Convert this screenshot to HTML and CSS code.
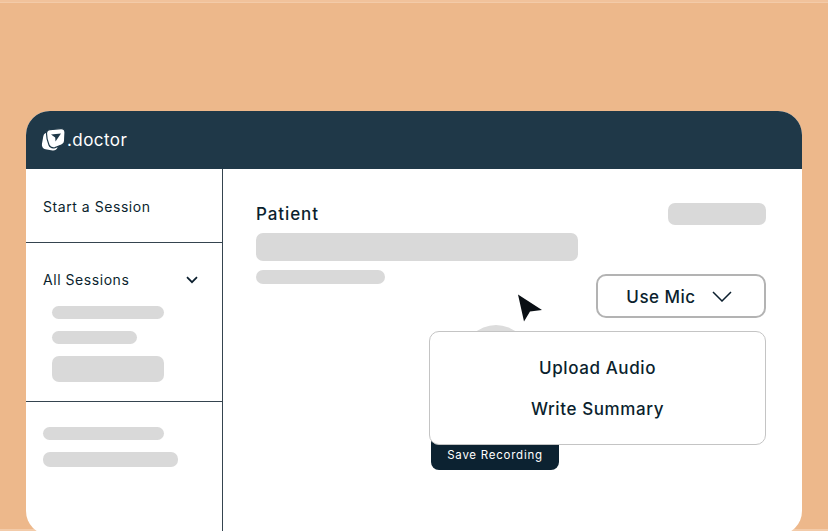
FILE: index.html

```html
<!DOCTYPE html>
<html>
<head>
  <meta charset="UTF-8">
  <title>.doctor</title>
  <link rel="stylesheet" href="styles.css">
</head>
<body>
  <div class="frame">
    <div class="card">
      <header class="topbar">
        <svg class="logo" width="26" height="26" viewBox="0 0 26 26">
          <rect x="1.5" y="6" width="16" height="17" rx="4.5" transform="rotate(10 9.5 14.5)" fill="#fff"/>
          <path d="M5.5 6.5 Q5.5 3 9 2.6 L20 1.6 Q24 1.5 24 5.5 L23.6 14 Q23.4 17 20.5 18 L14 20.6 Q9.5 21.5 8 18 Q5.5 12 5.5 6.5 Z" fill="#fff" stroke="#1f3848" stroke-width="1.2"/>
          <path d="M10 7.5 L20 6.6 L14.5 14.5 L14.2 10.6 Z" fill="#1f3848"/>
        </svg>
        <span class="brand">.doctor</span>
      </header>
      <div class="body">
        <aside class="sidebar">
          <section class="side-start">Start a Session</section>
          <section class="side-sessions">
            <div class="sessions-head">
              <span>All Sessions</span>
              <svg width="12" height="8" viewBox="0 0 12 8"><path d="M1 1.2 L6 6.2 L11 1.2" fill="none" stroke="#0b1f2e" stroke-width="1.7"/></svg>
            </div>
            <div class="ph ph-a"></div>
            <div class="ph ph-b"></div>
            <div class="ph ph-c"></div>
          </section>
          <section class="side-extra">
            <div class="ph ph-d"></div>
            <div class="ph ph-e"></div>
          </section>
        </aside>
        <main class="content">
          <div class="patient-row">
            <div class="patient-label">Patient</div>
            <div class="ph ph-tag"></div>
          </div>
          <div class="ph ph-name"></div>
          <div class="ph ph-sub"></div>
          <div class="mic-row">
            <button class="mic-btn">
              <span>Use Mic</span>
              <svg width="20" height="11" viewBox="0 0 20 11"><path d="M1 1 L10 10 L19 1" fill="none" stroke="#0b1f2e" stroke-width="1.5"/></svg>
            </button>
          </div>
          <svg class="cursor" width="26" height="28" viewBox="0 0 26 28"><path d="M1 0.5 L25 16 L13 17.5 L7 27.5 Z" fill="#0a0f14"/></svg>
          <div class="circle"></div>
          <button class="save-btn">Save Recording</button>
          <div class="popup">
            <div>Upload Audio</div>
            <div>Write Summary</div>
          </div>
        </main>
      </div>
    </div>
  </div>
</body>
</html>
```

FILE: styles.css

```css
html, body { margin: 0; padding: 0; }
body { width: 828px; height: 531px; overflow: hidden; background: #f1c29b; font-family: Inter, "Liberation Sans", sans-serif; color: #0b1f2e; }
.frame { height: 529px; margin-top: 2px; padding: 108px 26px 0; box-sizing: border-box; background: #edb88b; border-top: 1px solid #f3cba9; border-bottom: 2px solid #f3cba9; }
.card { height: 424px; background: #fff; border-radius: 24px; overflow: hidden; display: flex; flex-direction: column; }
.topbar { height: 58px; flex: none; background: #1f3848; display: flex; align-items: center; gap: 0; padding-left: 15px; box-sizing: border-box; }
.logo { margin-top: -1px; }
.brand { color: #fff; font-size: 17px; letter-spacing: 0.45px; }
.body { flex: 1; display: flex; }
.sidebar { width: 197px; flex: none; box-sizing: border-box; border-right: 1px solid #35444f; font-size: 14px; letter-spacing: 0.55px; display: flex; flex-direction: column; }
.side-start { height: 74px; box-sizing: border-box; padding: 29px 0 0 17px; border-bottom: 1px solid #35444f; }
.side-sessions { height: 159px; box-sizing: border-box; padding: 28px 24px 0 17px; border-bottom: 1px solid #35444f; }
.sessions-head { display: flex; justify-content: space-between; align-items: center; margin-bottom: 18px; }
.side-extra { padding: 25px 0 0 17px; }
.ph { background: #d9d9d9; border-radius: 7px; }
.ph-a { width: 112px; height: 13px; margin: 0 0 12px 9px; }
.ph-b { width: 85px; height: 13px; margin: 0 0 12px 9px; }
.ph-c { width: 112px; height: 26px; margin-left: 9px; }
.ph-d { width: 121px; height: 13px; margin-bottom: 12px; }
.ph-e { width: 135px; height: 15px; }
.content { flex: 1; position: relative; padding: 34px 36px 0 33px; }
.patient-row { display: flex; justify-content: space-between; align-items: flex-start; height: 30px; }
.patient-label { font-size: 17px; font-weight: 500; letter-spacing: 0.9px; margin-top: 1px; }
.ph-tag { width: 98px; height: 22px; }
.ph-name { width: 322px; height: 28px; }
.ph-sub { width: 129px; height: 14px; margin-top: 9px; }
.mic-row { display: flex; justify-content: flex-end; margin-top: -10px; }
.mic-btn { width: 170px; height: 44px; display: flex; align-items: center; justify-content: center; gap: 16px; background: #fff; border: 2px solid #b3b3b3; border-radius: 10px; font: 500 17px Inter, "Liberation Sans", sans-serif; letter-spacing: 0.5px; color: #0b1f2e; padding: 1px 4px 0 0; }
.cursor { position: absolute; left: 294px; top: 125px; }
.circle { position: absolute; left: 240px; top: 156px; width: 66px; height: 66px; border-radius: 50%; background: #dcdcdc; }
.save-btn { position: absolute; left: 208px; top: 266px; width: 128px; height: 35px; padding: 4px 0 0; background: #0c2231; color: #fff; border: 0; border-radius: 8px; font: 400 11.5px Inter, "Liberation Sans", sans-serif; letter-spacing: 0.75px; }
.popup { position: absolute; left: 206px; top: 162px; width: 337px; height: 114px; box-sizing: border-box; padding-top: 2px; background: #fff; border: 1px solid #c4c4c4; border-radius: 10px; display: flex; flex-direction: column; align-items: center; justify-content: center; gap: 20px; font-size: 17px; font-weight: 500; letter-spacing: 0.6px; line-height: 21px; }
```
